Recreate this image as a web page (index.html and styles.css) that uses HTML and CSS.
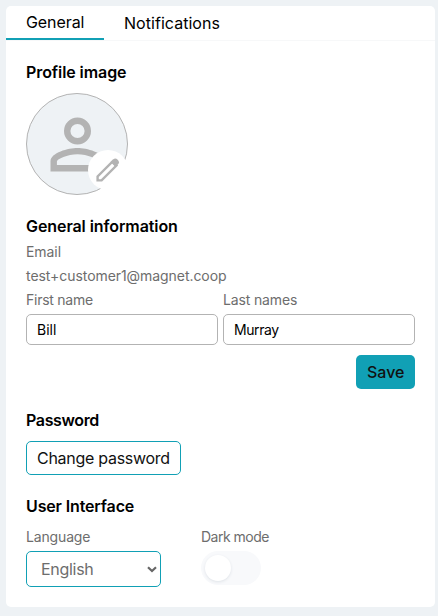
FILE: index.html
```html
<!DOCTYPE html>
<html lang="en">
<head>
<meta charset="utf-8">
<title>Profile settings</title>
<link rel="stylesheet" href="styles.css">
</head>
<body>
<main class="card">
  <nav class="tabs">
    <a class="tab tab-active"><span class="t-general">General</span></a>
    <a class="tab"><span class="t-notifications">Notifications</span></a>
  </nav>
  <div class="content">
    <section class="profile">
      <h2><span class="t-profile">Profile image</span></h2>
      <div class="avatar">
        <svg class="person" viewBox="0 0 24 24"><path d="M12 5.9a2.1 2.1 0 1 1 0 4.2 2.1 2.1 0 0 1 0-4.2m0 9c2.97 0 6.1 1.46 6.1 2.1v1.1H5.9V17c0-.64 3.13-2.1 6.1-2.1M12 4a4 4 0 1 0 0 8 4 4 0 0 0 0-8m0 9c-2.67 0-8 1.34-8 4v3h16v-3c0-2.66-5.33-4-8-4"/></svg>
        <button class="edit" aria-label="Edit">
          <svg viewBox="0 0 24 24"><path class="pencil" d="M1.6 22.4V18.4L16.4 3.6l4 4L5.6 22.4z"/><path class="tip" d="M14.6 4 17.4 1.2q2-1.6 4.3.5 2.2 2.3.6 4.4l-2.8 2.8z"/></svg>
        </button>
      </div>
    </section>
    <section class="information">
      <h2><span class="t-info">General information</span></h2>
      <div class="label"><span class="t-email">Email</span></div>
      <div class="label"><span class="t-address">test+customer1@magnet.coop</span></div>
      <div class="names">
        <label class="label"><span class="t-first">First name</span><input class="bill" value="Bill"></label>
        <label class="label"><span class="t-last">Last names</span><input class="murray" value="Murray"></label>
      </div>
      <button class="save"><span class="t-save">Save</span></button>
    </section>
    <section class="password">
      <h2><span class="t-password">Password</span></h2>
      <button class="change"><span class="t-change">Change password</span></button>
    </section>
    <section class="interface">
      <h2><span class="t-interface">User Interface</span></h2>
      <div class="options">
        <div class="label"><span class="t-language">Language</span>
          <div class="select"><span class="t-english">English</span><svg viewBox="0 0 10 7"><path d="M1 1.2 5 5l4-3.8"/></svg></div>
        </div>
        <div class="label"><span class="t-dark">Dark mode</span>
          <div class="switch"><i class="knob"></i></div>
        </div>
      </div>
    </section>
  </div>
</main>
</body>
</html>
```
FILE: styles.css
```css
* { box-sizing: border-box; }
body { margin: 0; padding: 6px 3px 9px 6px; height: 616px; background: #eef2f5; font: 400 16px/24px Inter, "Liberation Sans", sans-serif; color: #000; overflow: hidden; }
.card { height: 601px; background: #fff; border-radius: 5px; }
.tabs { display: flex; height: 35px; border-bottom: 1px solid #f7f8f9; }
.tab { padding: 5px 20px; height: 35px; white-space: nowrap; }
.tab-active { width: 98px; height: 34px; padding-top: 4px; border-bottom: 2px solid #11a0b5; }
.content { padding: 19px 20px 0; }
h2 { margin: 0; font-size: 16px; line-height: 24px; font-weight: 600; }
.t-general { letter-spacing: -.08px; }
.t-notifications { letter-spacing: .04px; }
.t-profile, .t-info { letter-spacing: -.08px; }
.t-email, .t-address { letter-spacing: -.06px; }
.t-language { letter-spacing: -.15px; }
.t-first { letter-spacing: -.25px; }
.t-last { letter-spacing: -.15px; }
.t-password { letter-spacing: -.36px; }
.t-change { letter-spacing: -.28px; }
.t-interface { letter-spacing: -.14px; }
.t-english { letter-spacing: -.3px; }
.t-dark { letter-spacing: -.5px; }
.profile { height: 154px; }
.avatar { position: relative; display: flex; align-items: center; justify-content: center; width: 102px; height: 102px; margin-top: 9px; border: 1px solid #b3b3b3; border-radius: 50%; background: #eef2f5; }
.person { width: 81px; height: 81px; fill: #b3b3b3; }
.edit { position: absolute; left: 61px; top: 56px; width: 40px; height: 40px; padding: 8px; border: 0; border-radius: 50%; background: #fff; }
.edit svg { display: block; width: 24px; height: 24px; }
.pencil { fill: none; stroke: #b3b3b3; stroke-width: 2.4; }
.tip { fill: #b3b3b3; }
.information { height: 194px; display: flex; flex-direction: column; }
.information h2 { margin-bottom: 2px; }
.label { display: block; font-size: 14px; line-height: 24px; color: #6d6d6d; white-space: nowrap; }
.names { display: grid; grid-template-columns: 1fr 1fr; gap: 5px; }
.label input { display: block; width: 100%; height: 31px; margin-top: 2px; padding: 0 10px; border: 1px solid #b3b3b3; border-radius: 5px; background: #fff; color: #000; font: 400 14px Inter, sans-serif; }
.label .murray { letter-spacing: -.4px; }
button { font: 400 16px/24px Inter, sans-serif; white-space: nowrap; color: #111; }
.save { align-self: flex-end; width: 59px; height: 34px; margin-top: 10px; padding: 0 0 0 11px; text-align: left; border: 0; border-radius: 5px; background: #11a0b5; font-weight: 500; }
.password { height: 86px; }
.change { display: block; width: 155px; height: 34px; margin-top: 9px; padding: 0 0 0 10px; text-align: left; border: 1px solid #11a0b5; border-radius: 5px; background: #fff; }
.options { display: flex; gap: 40px; margin-top: 7px; }
.select { display: flex; align-items: center; justify-content: space-between; width: 135px; height: 36px; margin-top: 2px; padding: 0 3px 0 14px; border: 1px solid #11a0b5; border-radius: 5px; font-size: 16px; }
.select svg { width: 10px; height: 7px; fill: none; stroke: #666; stroke-width: 2.2; }
.switch { width: 60px; height: 34px; margin-top: 2px; padding: 4px; border-radius: 17px; background: #f8f9fb; }
.knob { display: block; width: 26px; height: 26px; border-radius: 50%; background: #fff; box-shadow: 0 1px 3px #dfe3e8; }
```
